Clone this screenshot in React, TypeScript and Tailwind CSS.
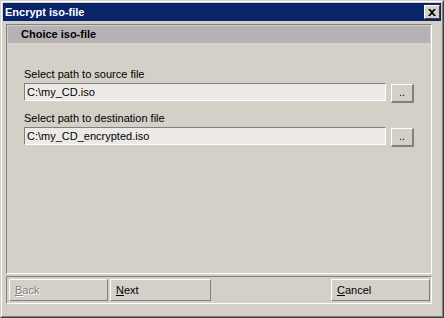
import React from 'react';

const font = "font-['Liberation_Sans',Arial,sans-serif]";

const PathField: React.FC<{ label: string; value: string; top: string }> = ({ label, value, top }) => (
  <div className={`flex flex-col ${top}`}>
    <div className="h-[13px] leading-[13px] text-[11px] text-black">{label}</div>
    <div className="mt-[2px] flex items-start">
      <div className="w-[362px] h-[18px] bg-[#ece9e6] border-t border-l border-t-[#808080] border-l-[#808080] border-b border-r border-b-white border-r-white flex items-center pl-[2px] text-[11px] text-black">
        {value}
      </div>
      <button className="ml-[5px] mt-[1px] w-[23px] h-[19px] bg-[#d4d0c8] border-t border-l border-white border-r-2 border-b-2 border-r-[#808080] border-b-[#808080] flex items-end justify-center pb-[3px] text-[11px] leading-none text-black">
        ..
      </button>
    </div>
  </div>
);

const BarButton: React.FC<{ w: string; disabled?: boolean; children: React.ReactNode }> = ({ w, disabled, children }) => (
  <button
    className={`${w} h-[22px] bg-[#d4d0c8] border-t border-l border-white border-r border-b border-r-[#808080] border-b-[#808080] flex items-center pl-[5px] text-[11px] ${
      disabled ? 'text-[#808080] [text-shadow:1px_1px_0_#fff]' : 'text-black'
    }`}
  >
    {children}
  </button>
);

export default function App() {
  return (
    <div className={`w-[444px] h-[318px] ${font} border border-t-[#d4d0c8] border-l-[#d4d0c8] border-r-[#404040] border-b-[#404040]`}>
      <div className="w-full h-full bg-[#d4d0c8] border border-t-white border-l-white border-r-[#808080] border-b-[#808080] p-[1px] flex flex-col">
        {/* title bar */}
        <div className="h-[18px] bg-[#0a246a] flex items-center justify-between pl-[2px] pr-[1px]">
          <span className="text-white font-bold text-[11px] leading-none">Encrypt iso-file</span>
          <button className="w-[16px] h-[14px] bg-[#d4d0c8] border-t border-l border-white border-r border-b border-r-[#404040] border-b-[#404040] flex items-center justify-center">
            <svg width="8" height="7" viewBox="0 0 8 7">
              <path d="M0 0h2l2 2 2-2h2L5 3.5 8 7H6L4 5 2 7H0l3-3.5z" fill="#000" />
            </svg>
          </button>
        </div>

        {/* main panel */}
        <div className="mt-[3px] ml-[3px] mr-[9px] h-[250px] border-t border-l border-t-[#808080] border-l-[#808080] border-b border-r border-b-white border-r-white p-[1px] flex flex-col">
          <div className="h-[17px] bg-[#b5b2b5] flex items-center pl-[13px] text-[11px] font-bold text-black">
            Choice iso-file
          </div>
          <div className="pl-[16px] flex flex-col">
            <PathField top="mt-[25px]" label="Select path to source file" value="C:\my_CD.iso" />
            <PathField top="mt-[9px]" label="Select path to destination file" value="C:\my_CD_encrypted.iso" />
          </div>
        </div>

        {/* button bar */}
        <div className="mt-[2px] ml-[3px] mr-[9px] h-[28px] border-t border-l border-t-[#808080] border-l-[#808080] border-b border-r border-b-white border-r-white pt-[2px] pl-[2px] pr-[1px] flex items-start">
          <BarButton w="w-[99px]" disabled>
            <span><span className="underline">B</span>ack</span>
          </BarButton>
          <div className="ml-[2px]">
            <BarButton w="w-[101px]">
              <span><span className="underline">N</span>ext</span>
            </BarButton>
          </div>
          <div className="ml-auto">
            <BarButton w="w-[99px]">
              <span><span className="underline">C</span>ancel</span>
            </BarButton>
          </div>
        </div>
      </div>
    </div>
  );
}
